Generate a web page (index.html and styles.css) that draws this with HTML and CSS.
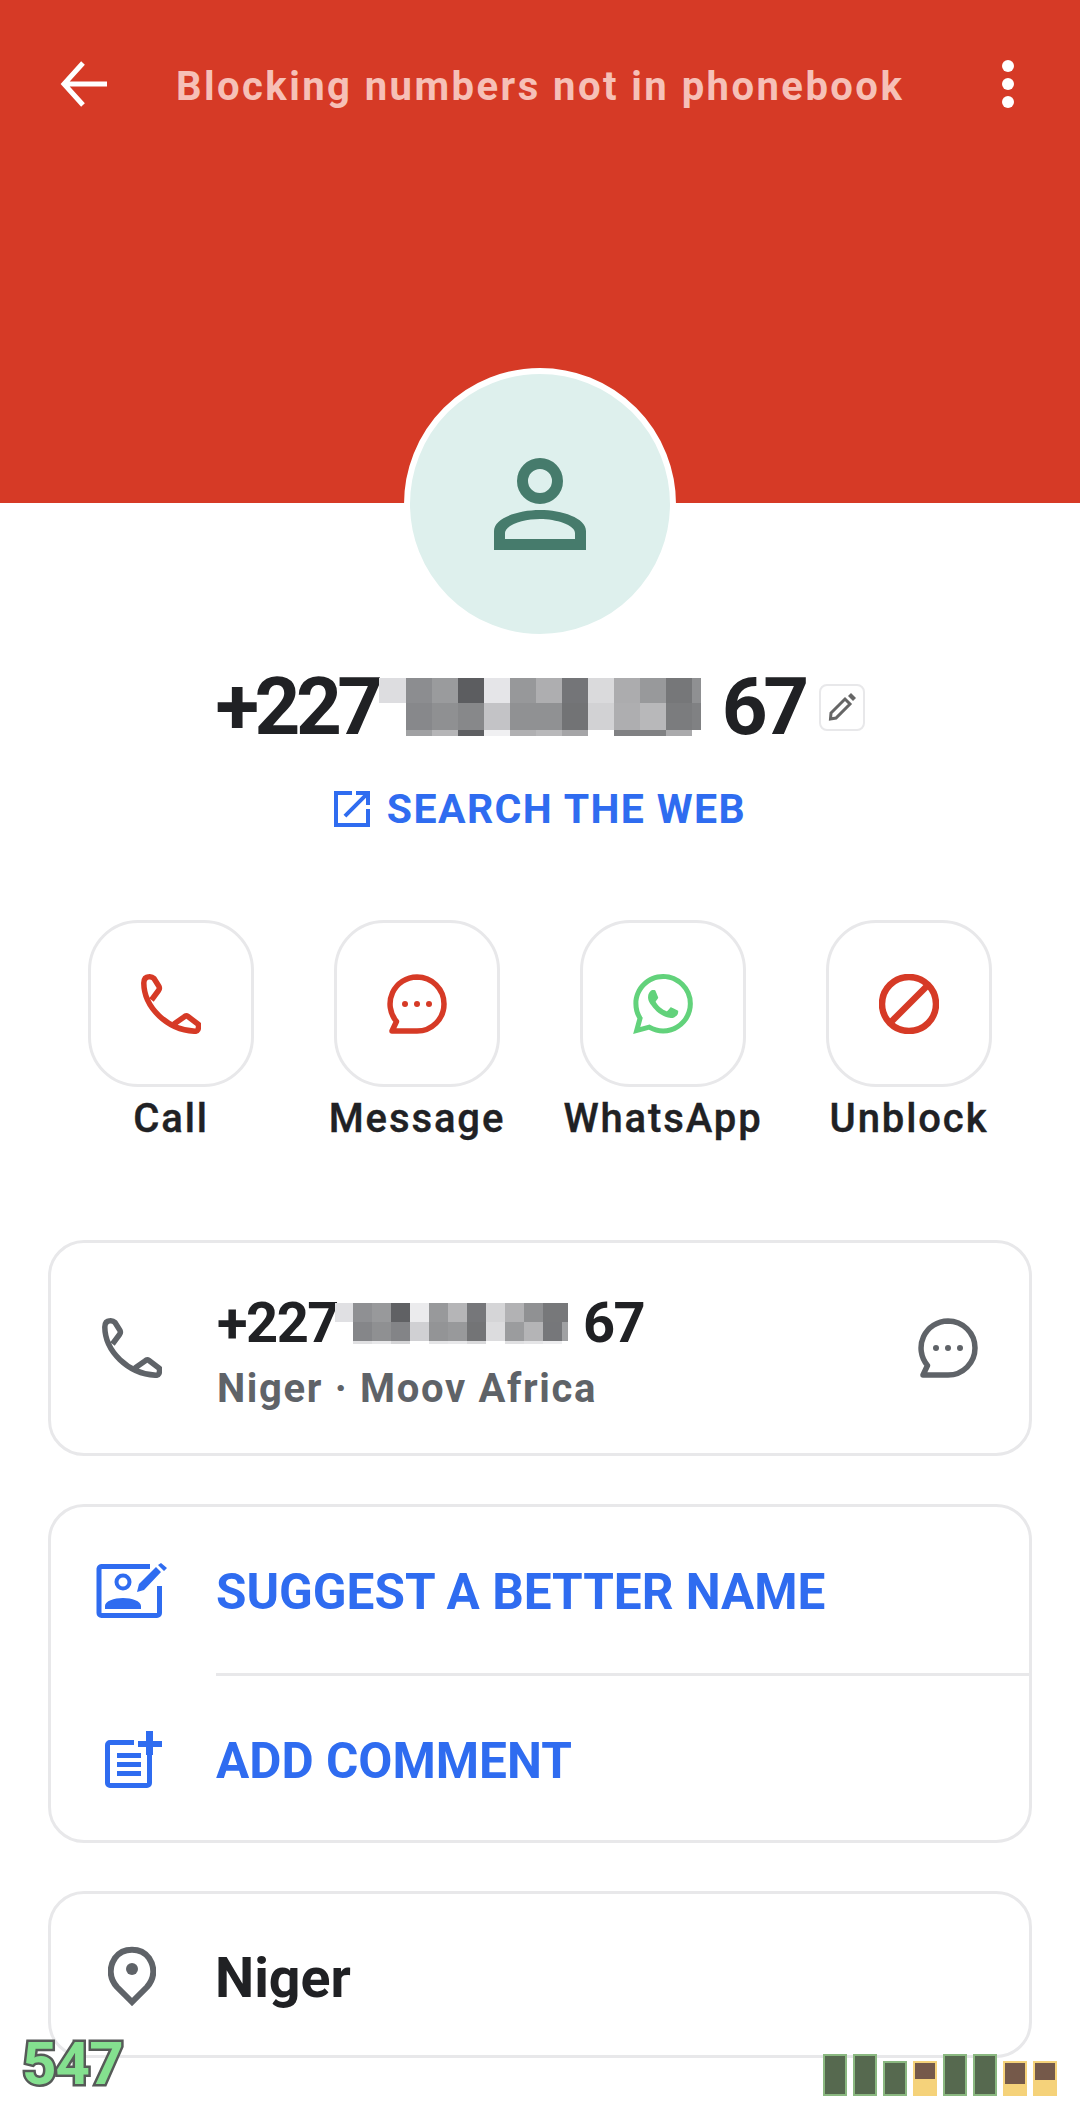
FILE: index.html
```html
<!DOCTYPE html>
<html lang="en">
<head>
<meta charset="utf-8">
<title>Caller profile</title>
<link rel="stylesheet" href="styles.css">
</head>
<body>
<div class="page">
  <header class="hero">
    <div class="topbar">
      <svg class="back" viewBox="0 0 48 48"><path d="M47 24H5M23 3 4 24l19 21" fill="none" stroke="#fff" stroke-width="5"/></svg>
      <div class="title">Blocking numbers not in phonebook</div>
      <div class="kebab"><i></i><i></i><i></i></div>
    </div>
  </header>

  <div class="avatar">
    <svg class="person" viewBox="0 0 92 92">
      <circle cx="46" cy="23" r="17.5" fill="none" stroke="#467b6c" stroke-width="11"/>
      <path fill="#467b6c" fill-rule="evenodd" d="M0 92V73C0 60 24 52 46 52s46 8 46 21v19ZM11 81h70v-6C81 67 62 61 46 61S11 67 11 75Z"/>
    </svg>
  </div>

  <div class="number">
    <span>+227</span>
    <div class="mosaic mosaic-big"><div class="b1"></div><div class="b2"></div><div class="b3"></div></div>
    <span>67</span>
    <div class="edit">
      <svg viewBox="0 0 30 30"><path fill="none" stroke="#666" stroke-width="3" d="M4 21 18 7l5 5L9 26l-5.500 1Z"/><path fill="#666" d="M21 4l3-3 5 5-3 3Z"/></svg>
    </div>
  </div>

  <div class="search">
    <svg viewBox="3 3 18 18"><path fill="#2f6cf0" d="M19 19H5V5h7V3H3v18h18v-9h-2v7zM14 3v2h3.590l-9.830 9.830 1.410 1.410L19 6.410V10h2V3h-7z"/></svg>
    <span>SEARCH THE WEB</span>
  </div>

  <div class="actions">
    <div class="action">
      <div class="tile">
        <svg viewBox="0 0 60 60"><path class="ln red" d="M2.800 9C3 33 26 56 54 57.300Q58 57.500 57.500 50.500L47 42.500Q45 41 43 43L33 50M2.800 9Q3 3 8 2.800 11 2.500 13 4.500L18 12.500Q19 14.500 17.500 16.500L10.500 26"/></svg>
      </div>
      <span class="label">Call</span>
    </div>
    <div class="action">
      <div class="tile">
        <svg viewBox="0 0 60 60"><path class="ln red" d="M30 3A27 27 0 0 1 30 57H5L9.500 47.500A27 27 0 0 1 30 3Z"/><g class="dots-red"><circle cx="18" cy="30" r="3"/><circle cx="30" cy="30" r="3"/><circle cx="42" cy="30" r="3"/></g></svg>
      </div>
      <span class="label">Message</span>
    </div>
    <div class="action">
      <div class="tile">
        <svg viewBox="0 0 24 24"><path fill="#62d27b" d="M17.472 14.382c-.297-.149-1.758-.867-2.030-.967-.273-.099-.471-.148-.670.150-.197.297-.767.966-.940 1.164-.173.199-.347.223-.644.075-.297-.150-1.255-.463-2.390-1.475-.883-.788-1.480-1.761-1.653-2.059-.173-.297-.018-.458.130-.606.134-.133.298-.347.446-.520.149-.174.198-.298.298-.497.099-.198.050-.371-.025-.520-.075-.149-.669-1.612-.916-2.207-.242-.579-.487-.500-.669-.510-.173-.008-.371-.010-.570-.010-.198 0-.520.074-.792.372-.272.297-1.040 1.016-1.040 2.479 0 1.462 1.065 2.875 1.213 3.074.149.198 2.096 3.200 5.077 4.487.709.306 1.262.489 1.694.625.712.227 1.360.195 1.871.118.571-.085 1.758-.719 2.006-1.413.248-.694.248-1.289.173-1.413-.074-.124-.272-.198-.570-.347m-5.421 7.403h-.004a9.870 9.870 0 0 1-5.031-1.378l-.361-.214-3.741.982.998-3.648-.235-.374a9.860 9.860 0 0 1-1.510-5.260c.001-5.450 4.436-9.884 9.888-9.884 2.640 0 5.122 1.030 6.988 2.898a9.825 9.825 0 0 1 2.893 6.994c-.003 5.450-4.437 9.884-9.885 9.884m8.413-18.297A11.815 11.815 0 0 0 12.050 0C5.495 0 .160 5.335.157 11.892c0 2.096.547 4.142 1.588 5.945L.057 24l6.305-1.654a11.882 11.882 0 0 0 5.683 1.448h.005c6.554 0 11.890-5.335 11.893-11.893a11.821 11.821 0 0 0-3.480-8.413z"/></svg>
      </div>
      <span class="label">WhatsApp</span>
    </div>
    <div class="action">
      <div class="tile">
        <svg viewBox="0 0 60 60"><circle class="ln red thick" cx="30" cy="30" r="27"/><path class="ln red thick" d="M11 49 49 11"/></svg>
      </div>
      <span class="label">Unblock</span>
    </div>
  </div>

  <section class="card card-phone">
    <svg class="ic-phone" viewBox="0 0 60 60"><path class="ln gray" d="M2.800 9C3 33 26 56 54 57.300Q58 57.500 57.500 50.500L47 42.500Q45 41 43 43L33 50M2.800 9Q3 3 8 2.800 11 2.500 13 4.500L18 12.500Q19 14.500 17.500 16.500L10.500 26"/></svg>
    <div class="phone-text">
      <div class="phone-num">
        <span>+227</span>
        <div class="mosaic mosaic-small"><div class="s1"></div><div class="s2"></div><div class="s3"></div></div>
        <span>67</span>
      </div>
      <div class="carrier">Niger · Moov Africa</div>
    </div>
    <svg class="ic-chat" viewBox="0 0 60 60"><path class="ln gray" d="M30 3A27 27 0 0 1 30 57H5L9.500 47.500A27 27 0 0 1 30 3Z"/><g class="dots-gray"><circle cx="18" cy="30" r="3"/><circle cx="30" cy="30" r="3"/><circle cx="42" cy="30" r="3"/></g></svg>
  </section>

  <section class="card card-links">
    <div class="link-row">
      <div class="link-icon">
        <svg class="ic-suggest" viewBox="0 0 71 55">
          <path fill="none" stroke="#2f6cf0" stroke-width="5" d="M54 3.500H5.500a3 3 0 0 0-2.500 2.500V50a2.500 2.500 0 0 0 2.500 2.500H61a2.500 2.500 0 0 0 2.500-2.500V23"/>
          <circle cx="27" cy="19" r="6.500" fill="none" stroke="#2f6cf0" stroke-width="4"/>
          <path fill="#2f6cf0" d="M9 46v-3c0-5 9-8 18-8s18 3 18 8v3ZM41 29l2-8L60 4l5 5-17 18ZM62 2l3-2 6 5-3 3Z"/>
        </svg>
      </div>
      <span class="link-text">SUGGEST A BETTER NAME</span>
    </div>
    <div class="divider"></div>
    <div class="link-row">
      <div class="link-icon">
        <svg class="ic-comment" viewBox="0 0 57 57">
          <path fill="none" stroke="#2f6cf0" stroke-width="5" d="M29 11.500H5a2.500 2.500 0 0 0-2.500 2.500V52a2.500 2.500 0 0 0 2.500 2.500H42a2.500 2.500 0 0 0 2.500-2.500V24"/>
          <path fill="#2f6cf0" d="M41 0h7v10h9v6h-9v8h-7v-8h-8v-6h8ZM12 22h24v5H12ZM12 31h24v5H12ZM12 40h24v5H12Z"/>
        </svg>
      </div>
      <span class="link-text">ADD COMMENT</span>
    </div>
  </section>

  <section class="card card-place">
    <svg class="ic-pin" viewBox="0 0 48 60"><path fill="none" stroke="#5f6368" stroke-width="6" d="M24 56 9 41C1 32 1 21 7 12 15 1 33 1 41 12c6 9 6 20-2 29Z"/><circle cx="24" cy="23" r="6" fill="#5f6368"/></svg>
    <span class="place">Niger</span>
  </section>

  <div class="counter">547</div>
  <div class="bars">
    <div class="bar tall"></div>
    <div class="bar tall"></div>
    <div class="bar short"></div>
    <div class="bar low l1"></div>
    <div class="bar tall"></div>
    <div class="bar tall"></div>
    <div class="bar low l2"></div>
    <div class="bar low l3"></div>
  </div>
</div>
</body>
</html>
```
FILE: styles.css
```css
* { box-sizing: border-box; }
html, body { margin: 0; padding: 0; background: #fff; }
body { font-family: Roboto, "Liberation Sans", sans-serif; color: #202124; }
.page { position: relative; width: 1080px; height: 2116px; overflow: hidden; background: #fff; }

.hero { height: 503px; background: #d63a26; }
.topbar { display: flex; align-items: center; height: 172px; padding: 0 66px 0 60px; }
.back { width: 48px; height: 48px; flex: none; margin-top: -4px; }
.title { flex: 1; margin-left: 68px; font-size: 40px; font-weight: 700; letter-spacing: 2.45px; color: #f6c0b7; white-space: nowrap; }
.kebab { display: flex; flex-direction: column; gap: 6px; margin-top: -4px; }
.kebab i { display: block; width: 12px; height: 12px; border-radius: 50%; background: #fff; }

.avatar { position: relative; width: 272px; height: 272px; margin: -135px auto 0; border: 6px solid #fff; border-radius: 50%; background: #def0ed; display: flex; align-items: center; justify-content: center; }
.person { width: 92px; height: 92px; }

.number { display: flex; align-items: center; justify-content: center; height: 58px; margin-top: 38px; font-size: 80px; font-weight: 700; letter-spacing: -4.5px; line-height: 58px; }
.mosaic { display: flex; flex-direction: column; }
.mosaic-big { width: 322px; height: 58px; margin: 0 21px 0 0; }
.b1 { height: 25px; background: linear-gradient(90deg, #dddde0 0 27px, #8c8d90 27px 53px, #9a9b9d 53px 79px, #5c5d60 79px 105px, #e5e5e8 105px 131px, #97989a 131px 157px, #aeaeb0 157px 183px, #747578 183px 209px, #dadadc 209px 235px, #acacae 235px 261px, #98999b 261px 287px, #767779 287px 313px, #8f9092 313px 322px); }
.b2 { height: 27px; background: linear-gradient(90deg, #fff 0 27px, #87888b 27px 53px, #8f9092 53px 79px, #87888a 79px 105px, #c3c3c6 105px 131px, #909193 131px 157px, #909193 157px 183px, #727375 183px 209px, #d2d2d4 209px 235px, #aeaeb0 235px 261px, #b8b8ba 261px 287px, #7b7c7e 287px 313px, #808183 313px 322px); }
.b3 { height: 6px; background: linear-gradient(90deg, #fff 0 27px, #a0a1a3 27px 53px, #b5b5b7 53px 79px, #5e5f62 79px 105px, #f0f0f2 105px 131px, #b0b0b2 131px 157px, #b8b8ba 157px 183px, #a5a5a7 183px 209px, #fff 209px 235px, #808183 235px 261px, #808183 261px 287px, #aaaaac 287px 313px, #fff 313px 322px); }
.edit { width: 46px; height: 47px; margin-left: 14px; border: 2px solid #e8e8ea; border-radius: 8px; display: flex; align-items: center; justify-content: center; letter-spacing: 0; }
.edit svg { width: 30px; height: 30px; }

.search { display: flex; align-items: center; justify-content: center; gap: 17px; height: 36px; margin-top: 55px; font-size: 41px; font-weight: 700; letter-spacing: 1.4px; color: #2f6cf0; }
.search svg { width: 36px; height: 36px; flex: none; }

.actions { display: flex; gap: 80px; margin-top: 93px; padding-left: 88px; }
.action { width: 166px; display: flex; flex-direction: column; align-items: center; }
.tile { width: 166px; height: 167px; border: 3px solid #e8e8ea; border-radius: 50px; display: flex; align-items: center; justify-content: center; }
.tile svg { width: 60px; height: 60px; }
.label { margin-top: 8px; font-size: 40px; line-height: 48px; font-weight: 500; letter-spacing: 1.9px; white-space: nowrap; -webkit-text-stroke: .4px #202124; }

.ln { fill: none; stroke-width: 5.500; stroke-linejoin: round; }
.red { stroke: #d63a26; }
.gray { stroke: #5f6368; }
.thick { stroke-width: 6.500; }
.dots-red { fill: #d63a26; }
.dots-gray { fill: #5f6368; }

.card { width: 984px; margin-left: 48px; border: 3px solid #e8e8ea; border-radius: 36px; background: #fff; }
.card-phone { display: flex; align-items: center; height: 216px; margin-top: 97px; padding: 0 51px 0 51px; }
.ic-phone { width: 60px; height: 60px; flex: none; }
.phone-text { flex: 1; margin-left: 55px; margin-top: 20px; }
.phone-num { display: flex; align-items: center; height: 44px; font-size: 56px; font-weight: 700; line-height: 44px; letter-spacing: -1.500px; }
.mosaic-small { width: 233px; height: 41px; margin: 0 15px 0 -3px; }
.s1 { height: 19px; background: linear-gradient(90deg, #e0e0e3 0 18px, #8f9093 18px 37px, #98999b 37px 56px, #606164 56px 75px, #ebebed 75px 94px, #98999b 94px 113px, #b5b5b7 113px 132px, #76777a 132px 151px, #d5d5d7 151px 170px, #b2b2b4 170px 189px, #909193 189px 208px, #77787a 208px 233px); }
.s2 { height: 19px; background: linear-gradient(90deg, #fff 0 18px, #858689 18px 37px, #8f9092 37px 56px, #838487 56px 75px, #d0d0d3 75px 94px, #939496 94px 113px, #98999b 113px 132px, #737476 132px 151px, #dcdcde 151px 170px, #9b9c9e 170px 189px, #b4b4b6 189px 208px, #76777a 208px 227px, #a0a1a3 227px 233px); }
.s3 { height: 3px; background: linear-gradient(90deg, #fff 0 18px, #e0e0e2 18px 37px, #e8e8ea 37px 56px, #d5d5d7 56px 75px, #fff 75px 94px, #e5e5e7 94px 113px, #e8e8ea 113px 132px, #dadadc 132px 151px, #fff 151px 170px, #e0e0e2 170px 189px, #e5e5e7 189px 208px, #ededef 208px 227px, #fff 227px 233px); }
.carrier { margin-top: 18px; font-size: 40px; line-height: 52px; font-weight: 700; letter-spacing: 1.65px; color: #5f6368; white-space: nowrap; }
.ic-chat { width: 60px; height: 60px; flex: none; }

.card-links { height: 339px; margin-top: 48px; padding-top: 0; }
.link-row { display: flex; align-items: center; height: 166px; }
.link-icon { width: 165px; flex: none; display: flex; justify-content: flex-end; padding-right: 54px; }
.ic-suggest { width: 71px; height: 55px; margin-right: -5px; }
.ic-comment { width: 57px; height: 57px; margin-right: 0; }
.link-text { margin-top: 3px; font-size: 49.5px; font-weight: 700; color: #2f6cf0; white-space: nowrap; }
.divider { height: 3px; margin-left: 165px; background: #e8e8ea; }

.card-place { display: flex; align-items: center; height: 167px; margin-top: 48px; padding-left: 57px; padding-top: 3px; }
.ic-pin { width: 48px; height: 60px; flex: none; }
.place { margin-left: 59px; margin-top: 4px; font-size: 55.5px; font-weight: 700; }

.counter { position: absolute; left: 22px; top: 2028px; font-family: Roboto, sans-serif; font-size: 60px; line-height: 72px; font-weight: 700; letter-spacing: -.8px; color: #84e08f; -webkit-text-stroke: 5px #565a58; paint-order: stroke fill; }
.bars { position: absolute; left: 823px; top: 2054px; height: 42px; display: flex; align-items: flex-end; gap: 6px; }
.bar { width: 24px; }
.tall { height: 42px; background: #56694f; border: 2px solid #8ab880; }
.short { height: 35px; background: #56694f; border: 2px solid #8ab880; }
.low { height: 35px; background: #f5d27a; padding: 2px; }
.low::before { content: ""; display: block; background: #75594a; }
.l1::before { height: 16px; }
.l2::before { height: 21px; }
.l3::before { height: 17px; }
```
